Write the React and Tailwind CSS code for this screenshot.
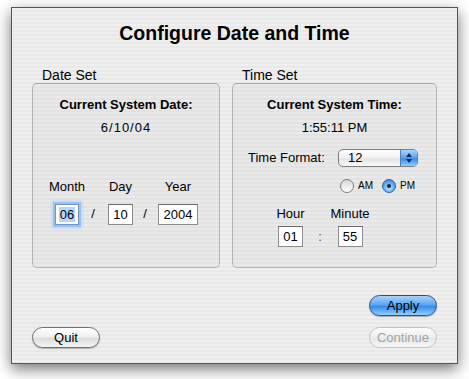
import React from "react";

const font = { fontFamily: '"Liberation Sans", Arial, sans-serif' };

function Field({ value, w, focused }) {
  return (
    <div
      className={`flex items-center justify-center bg-white text-[13px] text-black ${w} h-[21px] ${
        focused
          ? "border border-[#6f93c8] shadow-[0_0_0_2px_#9ec0ec,0_0_3px_3px_#b9d3f3]"
          : "border border-[#8c8c8c] border-t-[#6a6a6a]"
      }`}
    >
      <span className={focused ? "bg-[#b5d5ff] px-[1px] leading-[15px]" : "leading-[15px]"}>{value}</span>
    </div>
  );
}

function Radio({ checked, label }) {
  return (
    <div className="flex items-center gap-[4px]">
      <div
        className={`w-[14px] h-[14px] rounded-full flex items-center justify-center ${
          checked
            ? "border border-[#2d5fa8] bg-[radial-gradient(circle_at_50%_65%,#bfe3ff_0%,#62a8ef_55%,#2a6fd0_100%)]"
            : "border border-[#7a7a7a] bg-[linear-gradient(#d8d8d8,#ffffff)]"
        }`}
      >
        {checked && <div className="w-[4px] h-[4px] rounded-full bg-[#0f2648]" />}
      </div>
      <span className="text-[10px] leading-[12px] text-black">{label}</span>
    </div>
  );
}

function Button({ label, kind }) {
  const base =
    "w-[68px] h-[21px] rounded-full flex items-center justify-center text-[13px] leading-[15px]";
  if (kind === "blue")
    return (
      <div
        className={`${base} text-black border border-[#2b4f92] bg-[linear-gradient(#a9d3fb_0%,#5ea7f1_45%,#3a8ae8_55%,#8fd0ff_100%)] shadow-[0_1px_1px_rgba(0,0,0,0.3)]`}
      >
        {label}
      </div>
    );
  if (kind === "disabled")
    return (
      <div
        className={`${base} text-[#a3a3a3] border border-[#c4c4c4] bg-[linear-gradient(#fafafa_0%,#eeeeee_50%,#e6e6e6_55%,#f7f7f7_100%)]`}
      >
        {label}
      </div>
    );
  return (
    <div
      className={`${base} text-black border border-[#6e6e6e] bg-[linear-gradient(#ffffff_0%,#f0f0f0_45%,#dcdcdc_55%,#f5f5f5_100%)] shadow-[0_1px_1px_rgba(0,0,0,0.25)]`}
    >
      {label}
    </div>
  );
}

export default function App() {
  return (
    <div className="w-[469px] h-[379px] bg-white pt-[7px] pl-[11px]" style={font}>
      <div className="w-[447px] h-[357px] border border-[#555555] shadow-[0_5px_14px_rgba(0,0,0,0.55)] bg-[repeating-linear-gradient(180deg,#efefef_0px,#efefef_2px,#e8e8e8_2px,#e8e8e8_4px)] flex flex-col">
        <div className="pt-[14px] h-[36px] text-center font-bold text-[19.5px] leading-[22px] text-black">
          Configure Date and Time
        </div>

        <div className="mt-[24px] flex pl-[20px] gap-[12px]">
          {/* Date Set */}
          <div className="flex flex-col">
            <div className="h-[15px] pl-[10px] text-[14px] leading-[15px] text-black">Date Set</div>
            <div className="w-[188px] h-[185px] rounded-[5px] border border-[#b4b4b4] border-t-[#a8a8a8] bg-black/[0.025] flex flex-col items-center">
              <div className="mt-[13px] h-[16px] text-[13px] leading-[16px] font-bold text-black">
                Current System Date:
              </div>
              <div className="mt-[7px] h-[16px] text-[13px] leading-[16px] tracking-[1px] text-black">6/10/04</div>
              <div className="mt-[43px] self-start pl-[14px] grid grid-cols-[40px_12px_43px_6px_60px] grid-rows-[16px_22px] gap-y-[8px] items-center justify-items-center text-[13px] leading-[16px] text-black">
                <span>Month</span>
                <span />
                <span>Day</span>
                <span />
                <span>Year</span>
                <Field value="06" w="w-[24px]" focused />
                <span>/</span>
                <Field value="10" w="w-[25px]" />
                <span>/</span>
                <Field value="2004" w="w-[40px]" />
              </div>
            </div>
          </div>

          {/* Time Set */}
          <div className="flex flex-col">
            <div className="h-[15px] pl-[10px] text-[14px] leading-[15px] text-black">Time Set</div>
            <div className="w-[205px] h-[185px] rounded-[5px] border border-[#b4b4b4] border-t-[#a8a8a8] bg-black/[0.025] flex flex-col items-center">
              <div className="mt-[13px] h-[16px] text-[13px] leading-[16px] font-bold text-black">
                Current System Time:
              </div>
              <div className="mt-[7px] h-[16px] text-[13px] leading-[16px] text-black">1:55:11 PM</div>
              <div className="mt-[13px] self-start pl-[15px] flex items-center h-[18px]">
                <span className="w-[90px] text-[13px] leading-[16px] text-black">Time Format:</span>
                <div className="w-[80px] h-[18px] rounded-[5px] border border-[#7d7d7d] flex overflow-hidden bg-[linear-gradient(#ffffff,#f0f0f0_50%,#e2e2e2_55%,#fafafa)]">
                  <div className="flex-1 pl-[9px] text-[13px] leading-[16px] text-black">12</div>
                  <div className="w-[17px] border-l border-[#4f7dbf] bg-[linear-gradient(#a9d3fb_0%,#5ea7f1_45%,#3a8ae8_55%,#8fd0ff_100%)] flex flex-col items-center justify-center gap-[2px]">
                    <div className="w-0 h-0 border-l-[3px] border-r-[3px] border-b-[4px] border-l-transparent border-r-transparent border-b-[#102b55]" />
                    <div className="w-0 h-0 border-l-[3px] border-r-[3px] border-t-[4px] border-l-transparent border-r-transparent border-t-[#102b55]" />
                  </div>
                </div>
              </div>
              <div className="mt-[12px] self-start pl-[107px] flex items-center gap-[9px] h-[14px]">
                <Radio label="AM" />
                <Radio label="PM" checked />
              </div>
              <div className="mt-[13px] self-start pl-[37px] grid grid-cols-[41px_18px_42px] grid-rows-[16px_21px] gap-y-[4px] items-center justify-items-center text-[13px] leading-[16px] text-black">
                <span>Hour</span>
                <span />
                <span>Minute</span>
                <Field value="01" w="w-[25px]" />
                <span className="text-[#555]">:</span>
                <Field value="55" w="w-[25px]" />
              </div>
            </div>
          </div>
        </div>

        <div className="mt-[27px] flex justify-end pr-[20px]">
          <Button label="Apply" kind="blue" />
        </div>
        <div className="mt-[11px] flex justify-between pl-[20px] pr-[20px]">
          <Button label="Quit" />
          <Button label="Continue" kind="disabled" />
        </div>
      </div>
    </div>
  );
}
